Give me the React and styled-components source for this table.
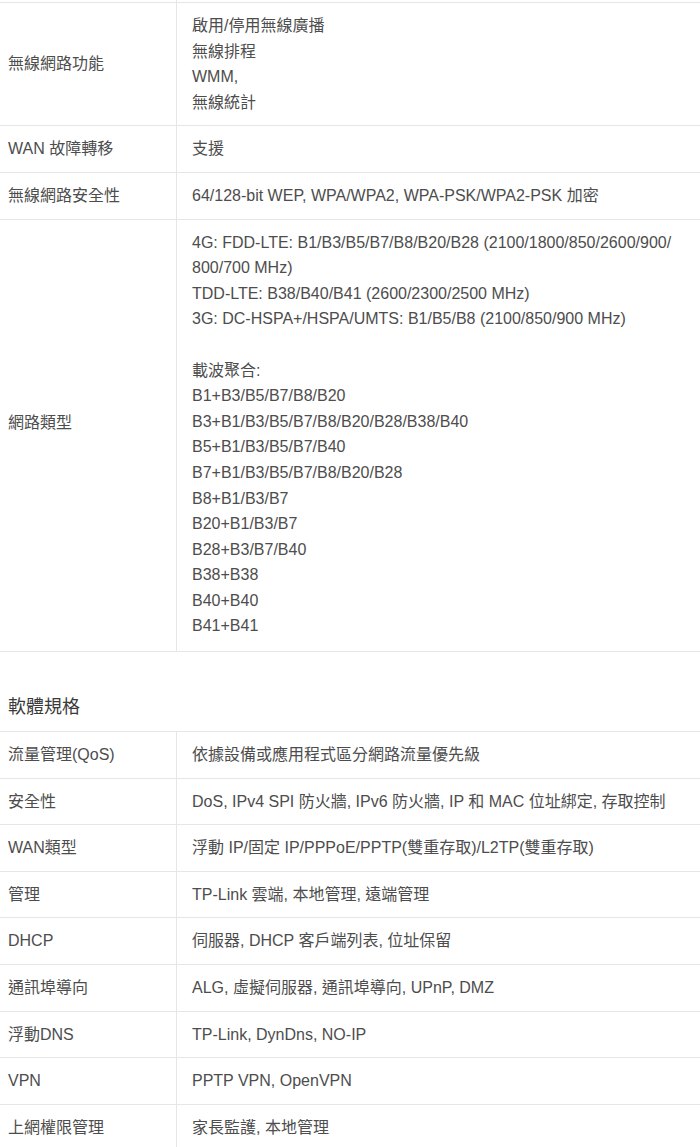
import React from "react";
import styled, { createGlobalStyle } from "styled-components";

const GlobalStyle = createGlobalStyle`
  body {
    margin: 0;
    background: #fff;
    font-family: Arial, "Liberation Sans", "Noto Sans CJK TC", sans-serif;
    color: #4d4d4d;
  }
`;

const Page = styled.div`
  width: 700px;
  overflow: hidden;
`;

// * Spec table
const Table = styled.div`
  display: flex;
  flex-direction: column;
`;

const Row = styled.div`
  display: grid;
  grid-template-columns: 177px 1fr;
  border-bottom: 1px solid #e6e6e6;
`;

const Stub = styled.div`
  display: grid;
  grid-template-columns: 177px 1fr;
  height: 2px;
  border-bottom: 1px solid #e6e6e6;

  &::before {
    content: "";
    border-right: 1px solid #e6e6e6;
  }
`;

const Label = styled.div`
  display: flex;
  align-items: center;
  padding: 10px 8px ${(p) => (p.$lift ? "36px" : "10px")};
  border-right: 1px solid #e6e6e6;
  font-size: 16px;
  line-height: 25.6px;
`;

const Value = styled.div`
  padding: 10px 15px ${(p) => (p.$tall ? "12px" : "10px")};
  font-size: 16px;
`;

const Line = styled.div`
  height: 25.6px;
  line-height: 25.6px;
  white-space: nowrap;
`;

const SectionTitle = styled.h3`
  margin: 0;
  padding: 42px 8px 11px;
  font-size: 18px;
  font-weight: normal;
  line-height: 26px;
  color: #3a3a3a;
  border-bottom: 1px solid #e6e6e6;
`;

const hardware = [
  ["無線網路功能", ["啟用/停用無線廣播", "無線排程", "WMM,", "無線統計"]],
  ["WAN 故障轉移", ["支援"]],
  ["無線網路安全性", ["64/128-bit WEP, WPA/WPA2, WPA-PSK/WPA2-PSK 加密"]],
  [
    "網路類型",
    [
      "4G: FDD-LTE: B1/B3/B5/B7/B8/B20/B28 (2100/1800/850/2600/900/",
      "800/700 MHz)",
      "TDD-LTE: B38/B40/B41 (2600/2300/2500 MHz)",
      "3G: DC-HSPA+/HSPA/UMTS: B1/B5/B8 (2100/850/900 MHz)",
      "",
      "載波聚合:",
      "B1+B3/B5/B7/B8/B20",
      "B3+B1/B3/B5/B7/B8/B20/B28/B38/B40",
      "B5+B1/B3/B5/B7/B40",
      "B7+B1/B3/B5/B7/B8/B20/B28",
      "B8+B1/B3/B7",
      "B20+B1/B3/B7",
      "B28+B3/B7/B40",
      "B38+B38",
      "B40+B40",
      "B41+B41",
    ],
    true,
  ],
];

const software = [
  ["流量管理(QoS)", ["依據設備或應用程式區分網路流量優先級"]],
  ["安全性", ["DoS, IPv4 SPI 防火牆, IPv6 防火牆, IP 和 MAC 位址綁定, 存取控制"]],
  ["WAN類型", ["浮動 IP/固定 IP/PPPoE/PPTP(雙重存取)/L2TP(雙重存取)"]],
  ["管理", ["TP-Link 雲端, 本地管理, 遠端管理"]],
  ["DHCP", ["伺服器, DHCP 客戶端列表, 位址保留"]],
  ["通訊埠導向", ["ALG, 虛擬伺服器, 通訊埠導向, UPnP, DMZ"]],
  ["浮動DNS", ["TP-Link, DynDns, NO-IP"]],
  ["VPN", ["PPTP VPN, OpenVPN"]],
  ["上網權限管理", ["家長監護, 本地管理"]],
];

function SpecRows({ rows }) {
  return rows.map(([label, lines, tall]) => (
    <Row key={label}>
      <Label $lift={tall}>{label}</Label>
      <Value $tall={tall}>
        {lines.map((ln, i) => (
          <Line key={i}>{ln}</Line>
        ))}
      </Value>
    </Row>
  ));
}

export default function App() {
  return (
    <Page>
      <GlobalStyle />
      <Table>
        <Stub />
        <SpecRows rows={hardware} />
      </Table>
      <SectionTitle>軟體規格</SectionTitle>
      <Table>
        <SpecRows rows={software} />
      </Table>
    </Page>
  );
}
